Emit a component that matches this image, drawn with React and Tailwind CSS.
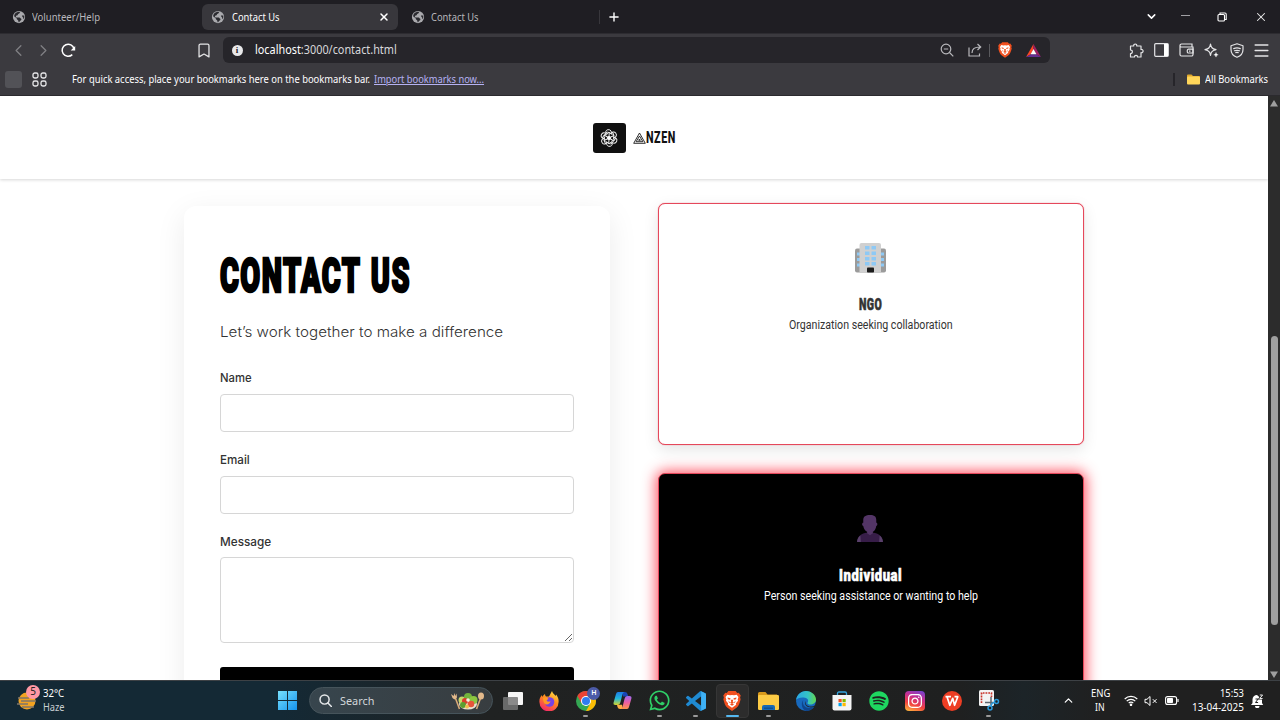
import React, { useLayoutEffect, useRef, useState } from "react";
import {
  Bookmark, ChevronDown, ChevronLeft, ChevronRight, ChevronUp, Menu, Plus, X,
} from "lucide-react";
import { FaInstagram, FaSpotify, FaWhatsapp } from "react-icons/fa";

// Condenses or widens a line of text so that it fills the given width.
function Fit({ w, className = "" , textClass = "", children }) {
  const ref = useRef(null);
  const [scale, setScale] = useState(1);
  useLayoutEffect(() => {
    setScale(w / ref.current.offsetWidth);
  }, [w]);
  return (
    <span className={"block whitespace-nowrap " + className} style={{ width: w }}>
      <span ref={ref} className={"inline-block origin-left " + textClass} style={{ transform: `scaleX(${scale})` }}>
        {children}
      </span>
    </span>
  );
}

function Cell({ className = "w-[25px]", children }) {
  return <div className={"flex shrink-0 items-center justify-center " + className}>{children}</div>;
}

function Globe() {
  return (
    <svg viewBox="0 0 24 24" className="size-[14px] shrink-0">
      <circle cx="12" cy="12" r="10.500" fill="#a9a9ad" />
      <path fill="#2a2a2f" d="M14 3.500c-.5 1.500-1 2.500-2.500 2.800-1.600.4-1 1.700-2 2.500-1 .7-2.300.3-2.800 1.700-.5 1.500 1 2.500 2.800 2.500h3c1.300 0 1.500 1 2.500 1.500 1.500.6 1.500 2 .5 3-.8.9-2.500 1-3 3.500l-1.500-.2c.5-2-.5-3-1.500-4-1.500-1.300-.8-2.300-2-3.300L3.500 10.500c.5-4 4-7.300 8-7.500zM17 9.500h4c.3 2 .3 4-.8 6-1-.4-1-1.500-1.200-2.500-.3-1.200-2-1-2-3.500z" />
    </svg>
  );
}

function TabStrip() {
  return (
    <div className="flex h-[33px] shrink-0 items-center bg-[#1f1e23] text-[11.500px] leading-4 text-[#b8b8bc]">
      <div className="flex w-[202px] items-center gap-[6px] pl-[12px]">
        <Globe />
        <Fit w={68}>Volunteer/Help</Fit>
      </div>
      <div className="flex h-[26px] w-[196px] items-center gap-[7px] rounded-[6px] bg-[#38373c] pr-[8px] pl-[9px] text-white">
        <Globe />
        <Fit w={48}>Contact Us</Fit>
        <X className="ml-auto size-[12px]" strokeWidth={3} />
      </div>
      <div className="flex h-[14px] w-[202px] items-center gap-[6px] border-r border-[#38373c] pl-[13px]">
        <Globe />
        <Fit w={48}>Contact Us</Fit>
      </div>
      <Cell className="w-[27px] text-white"><Plus className="size-[14px]" strokeWidth={2.4} /></Cell>
      <Cell className="ml-[512px] w-[24px] text-white"><ChevronDown className="size-[13px]" strokeWidth={2.800} /></Cell>
      <Cell className="ml-[10px] w-[24px]"><span className="mb-[2px] h-px w-[9px] bg-[#a0a0a4]" /></Cell>
      <Cell className="ml-[13px] w-[24px]">
        <svg viewBox="0 0 10 10" className="size-[10px]" fill="none" stroke="#fff" strokeWidth="1.100">
          <rect x="1" y="2.500" width="6.500" height="6.500" rx="1" />
          <path d="M3 2V1h5a1.200 1.200 0 0 1 1.200 1.200V7.500H8" />
        </svg>
      </Cell>
      <Cell className="ml-[15px] w-[24px] text-[#eee]"><X className="size-[14px]" strokeWidth={1.800} /></Cell>
    </div>
  );
}

function BraveLion({ className }) {
  return (
    <svg viewBox="0 0 20 22" className={className}>
      <path fill="#f1501f" d="M6 0h8l1.800 2 1.700-.3L19.700 5l-.7 2 .6 2c-1 4-2 7.500-4.600 9.500L10 22l-5-3.500C2.400 16.500 1.400 13 .4 9L1 7 .3 5l2.200-3.300L4.200 2z" />
      <path fill="#fff" d="M10 4.300l2.200.4 3-.7 2 2.600-.9 2.600.4 1.400-2.300 3 .2 1.500-2.200 1.700L10 18.600l-2.400-1.800-2.200-1.700.2-1.500-2.300-3 .4-1.400-.9-2.600 2-2.600 3 .7z" />
      <path fill="#f1501f" d="M5 7.200l3.400.8-.5 1.700L5.500 9zM15 7.200l-3.400.8.5 1.700 2.400-.7zM8.700 9.500h2.600l-.4 2.600 1.400.8L10 14.200l-2.300-1.300 1.400-.8zM6 10.800l1.700 1.700-.8 1zM14 10.800l-1.700 1.700.8 1zM7.600 14.900l2.400-.8 2.400.8-2.400 1.300z" />
    </svg>
  );
}

function Toolbar() {
  return (
    <div className="flex h-[33px] shrink-0 items-center border-t border-[#2d2c31] bg-[#3b3a3f] pl-[6px] text-[#e4e4e6]">
      <Cell><ChevronLeft className="size-[19px] text-[#808084]" strokeWidth={1.600} /></Cell>
      <Cell><ChevronRight className="size-[19px] text-[#808084]" strokeWidth={1.600} /></Cell>
      <Cell>
        <svg viewBox="0 0 16 16" className="mr-[1px] size-[16px]" fill="none" stroke="#fff" strokeWidth="1.500">
          <path d="M12.300 12.600A6 6 0 1 1 14 7" />
          <path d="M15.200 4v4.500h-4.500z" fill="#fff" stroke="none" />
        </svg>
      </Cell>
      <Cell className="ml-[111px] w-[24px]"><Bookmark className="h-[17px] w-[18px]" strokeWidth={1.800} /></Cell>
      <div className="ml-[7px] flex h-[26px] w-[827px] shrink-0 items-center rounded-[6px] bg-[#26252a]">
        <Cell className="w-[28px]">
          <span className="flex size-[11px] items-center justify-center rounded-full bg-[#e8e8ea] font-['Liberation_Serif',serif] text-[9px] leading-none font-bold text-[#26252a]">i</span>
        </Cell>
        <Fit w={142} className="ml-[4px] text-[12px] leading-4 text-[#d8d8da]">
          <span className="text-white">localhost</span>:3000/contact.html
        </Fit>
        <Cell className="ml-auto w-[28px]">
          <svg viewBox="0 0 14 14" className="size-[14px]" fill="none" stroke="#b8b8bc" strokeWidth="1.200">
            <circle cx="6" cy="6" r="4.800" /><path d="M3.800 6h4.400M9.500 9.500l3.800 3.800" />
          </svg>
        </Cell>
        <Cell className="w-[28px]">
          <svg viewBox="0 0 14 14" className="size-[14px]" fill="none" stroke="#b8b8bc" strokeWidth="1.200">
            <path d="M1 4.500V13h10.500v-2.500M4 10c0-4 2.500-6 8-6M9.500 1l3.200 3-3.200 3" />
          </svg>
        </Cell>
        <span className="h-[13px] w-px bg-[#5a5a5e]" />
        <Cell className="ml-[1px] w-[28px]"><BraveLion className="h-[16px] w-[14px]" /></Cell>
        <Cell className="mr-[2px] w-[29px]">
          <svg viewBox="0 0 16 14" className="mt-[1px] h-[13px] w-[15px]">
            <path fill="#ff4724" d="M8 0 0 14l5-3 3-5.500z" />
            <path fill="#9e1f63" d="M8 0l8 14-5-3-3-5.500z" />
            <path fill="#662d91" d="M0 14h16l-5-3H5z" />
            <path fill="#fff" d="M8 5.300 11.200 11H4.800z" />
          </svg>
        </Cell>
      </div>
      <Cell className="ml-[74px] w-[25px]">
        <svg viewBox="0 0 15 15" className="size-[15px]" fill="none" stroke="#e4e4e6" strokeWidth="1.200" strokeLinejoin="round">
          <path d="M1.500 3h3.200C4.300.3 8.200.3 7.800 3H12v3.500c2.800-.4 2.800 3.600 0 3.200V14H8.500c.3-2.300-3.200-2.300-3 0h-4v-3.500c2.500.2 2.500-3.700 0-3.500z" />
        </svg>
      </Cell>
      <Cell>
        <svg viewBox="0 0 15 14" className="h-[14px] w-[15px]">
          <rect x=".7" y=".7" width="13.600" height="12.600" rx="1" fill="none" stroke="#e4e4e6" strokeWidth="1.200" />
          <path d="M10 1H14v12H10z" fill="#fff" />
        </svg>
      </Cell>
      <Cell>
        <svg viewBox="0 0 15 14" className="h-[14px] w-[15px]" fill="none" stroke="#e4e4e6" strokeWidth="1.200">
          <path d="M1 3V11.500A1.500 1.500 0 0 0 2.500 13h10a1.500 1.500 0 0 0 1.500-1.500V4H2.200A1.200 1.200 0 0 1 1 2.800 1.500 1.500 0 0 1 2.500 1H13v3" />
          <path d="M14 6.200H9.500a1.200 1.200 0 0 0-1.200 1.200v1.400A1.200 1.200 0 0 0 9.500 10H14z" /><path d="M10 8.100h1.500" />
        </svg>
      </Cell>
      <Cell>
        <svg viewBox="0 0 15 15" className="size-[15px]" fill="none" stroke="#e4e4e6" strokeWidth="1.200" strokeLinejoin="round">
          <path d="M6.500 1c.6 3.500 1.500 4.600 5.500 5.700-4 1.100-4.900 2.200-5.500 5.700C5.900 8.900 5 7.800 1 6.700 5 5.600 5.900 4.500 6.500 1z" />
          <path d="M12 9.500c.3 1.400.8 1.900 2.200 2.300-1.400.4-1.900.9-2.200 2.300-.3-1.400-.8-1.900-2.200-2.300 1.400-.4 1.900-.9 2.200-2.300z" fill="#fff" strokeWidth=".5" />
        </svg>
      </Cell>
      <Cell>
        <svg viewBox="0 0 14 15" className="h-[15px] w-[14px]" fill="none" stroke="#e4e4e6" strokeWidth="1.200" strokeLinecap="round">
          <path d="M7 .8 13 2.700V6.500c0 4-2 6.300-6 7.800C3 12.800 1 10.500 1 6.500V2.700z" strokeLinejoin="round" />
          <path d="M3.700 5.600q3.300-1.300 6.600 0M4.500 7.700q2.500-.8 5 0M5.800 9.600q1.200-.4 2.400 0" />
        </svg>
      </Cell>
      <Cell><Menu className="size-[19px]" strokeWidth={1.800} /></Cell>
    </div>
  );
}

function BookmarksBar() {
  return (
    <div className="flex h-[30px] shrink-0 items-center border-b border-[#2b2a2e] bg-[#3b3a3f] pr-[12px] pb-[3px] pl-[5px] text-[11px] leading-4 text-white">
      <span className="size-[17px] rounded-[3px] bg-[#525257]" />
      <svg viewBox="0 0 15 15" className="mr-[1px] ml-[10px] size-[15px]" fill="none" stroke="#e8e8ea" strokeWidth="1.300">
        <rect x="1" y="1" width="5" height="5" rx="1.800" /><rect x="9" y="1" width="5" height="5" rx="1.800" />
        <rect x="1" y="9" width="5" height="5" rx="1.800" /><rect x="9" y="9" width="5" height="5" rx="1.800" />
      </svg>
      <Fit w={298} className="ml-[24px]">For quick access, place your bookmarks here on the bookmarks bar.</Fit>
      <Fit w={110} className="ml-[4px] text-[#b5b1f2]" textClass="underline underline-offset-1">Import bookmarks now...</Fit>
      <span className="ml-auto h-[13px] w-[2px] bg-[#26252a]" />
      <svg viewBox="0 0 13 11" className="ml-[12px] h-[11px] w-[13px]">
        <path fill="#e0a82c" d="M0 1.500Q0 .5 1 .5h3.500L6 2h6q1 0 1 1v5H0z" />
        <rect y="2.500" width="13" height="8" rx="1" fill="#ffd65a" />
      </svg>
      <Fit w={63} className="ml-[5px]">All Bookmarks</Fit>
    </div>
  );
}

function SiteHeader() {
  return (
    <header className="relative flex h-[83px] shrink-0 items-center justify-center bg-white pt-px shadow-[0_1px_3px_rgba(0,0,0,0.16)]">
      <div className="flex items-center">
        <div className="flex h-[30px] w-[33px] items-center justify-center rounded-[3px] bg-[#101010]">
          <svg viewBox="-10 -10 20 20" className="size-[20px]" fill="none" stroke="#f2f2f2" strokeWidth="1">
            {[0, 60, 120, 180, 240, 300].map((a) => (
              <g key={a} transform={`rotate(${a})`}>
                <path d="M-2.500-3.500C-4-5-3.500-8-1-8.300 2-8.700 3-6 2-4M0-1 .3-6M-3-5.500C-1-6.500 2-5 3.500-3" />
              </g>
            ))}
            <circle r="1.600" fill="#fff" />
          </svg>
        </div>
        <svg viewBox="0 0 13 12" className="ml-[7px] h-[12px] w-[13px]" fill="none" stroke="#181818" strokeWidth=".9">
          <path d="M6.500 1 12.300 11.300H.7zM6.500 4 9.900 9.700H3.100z" />
          <path d="M6.500 7 7.300 8.300H5.700z" />
        </svg>
        <Fit w={30} className="font-['Roboto',sans-serif] text-[16.500px] leading-[30px] font-extrabold text-[#111]" textClass="tracking-[0.8px]">NZEN</Fit>
      </div>
    </header>
  );
}

function ContactForm() {
  const label = "h-4 text-[12px] leading-4 font-medium text-[#333]";
  const field = "block h-[38px] w-full rounded-[4px] border border-[#d6d6d6] bg-white";
  return (
    <form className="mt-[27px] h-[560px] w-[426px] rounded-[12px] bg-white px-[36px] pt-[44px] font-['Inter',sans-serif] shadow-[0_8px_30px_rgba(0,0,0,0.08)]">
      <h1 className="h-[50px] font-['Roboto',sans-serif] text-[48px] leading-[51px] font-black text-black">
        <Fit w={191} textClass="tracking-[2.4px] [word-spacing:3px] [-webkit-text-stroke:2.600px_#000]">CONTACT US</Fit>
      </h1>
      <p className="mt-[21px] text-[14.500px] leading-[21px] font-light text-[#333]">
        <Fit w={283}>Let’s work together to make a difference</Fit>
      </p>
      <label className={"mt-[28px] block " + label}><Fit w={32}>Name</Fit></label>
      <input className={"mt-[8px] " + field} />
      <label className={"mt-[20px] block " + label}><Fit w={30}>Email</Fit></label>
      <input className={"mt-[8px] " + field} />
      <label className={"mt-[20px] block " + label}><Fit w={51}>Message</Fit></label>
      <textarea className="mt-[7px] block h-[86px] w-full resize-y rounded-[4px] border border-[#d6d6d6] bg-white" />
      <button type="button" className="mt-[24px] block h-[40px] w-full rounded-[3px] bg-black" />
    </form>
  );
}

function Building() {
  return (
    <svg viewBox="0 0 31 30" className="h-[30px] w-[31px]">
      <rect y="5.500" width="31" height="24" rx="2" fill="#9b9b9b" />
      {[9.500, 15, 20.500].map((y) => (
        <g key={y} fill="#8ec9f5"><rect x="2" y={y} width="4" height="3" /><rect x="25" y={y} width="4" height="3" /></g>
      ))}
      <path fill="#d0d0d0" d="M4.500 29.500V2Q4.500 0 6.500 0h17.500q2 0 2 2v27.500z" />
      {[3, 8.500, 14, 19].map((y) => (
        <g key={y} fill="#8ec9f5"><rect x="10" y={y} width="4.500" height="3.500" /><rect x="16.500" y={y} width="4.500" height="3.500" /></g>
      ))}
      <rect x="12" y="24.500" width="7" height="5" rx=".8" fill="#1c1c1c" />
    </svg>
  );
}

function Person() {
  return (
    <svg viewBox="0 0 27 28" className="mr-[1px] h-[27px] w-[26px]">
      <path fill="#371d48" d="M0 28c.5-5 3-8 9.500-9.500h8C24 20 26.500 23 27 28z" />
      <path fill="#59406a" d="M0 28c.3-3 1.300-5.300 3.500-6.800L4 28zM27 28c-.3-3-1.300-5.300-3.500-6.800L23 28z" />
      <path fill="#533566" d="M6.500 5C6.500 1.500 9 0 13.500 0S20 1.500 20 5v3c1.600 0 1.500 3 0 3.300-.5 3-1.800 5-3.500 6.200V19l-3 2-3-2v-1.500C8.800 16.300 7 14.300 6.500 11.300 5 11 4.900 8 6.500 8z" />
    </svg>
  );
}

function Choice({ icon, title, titleWidth, text, textWidth, className }) {
  return (
    <div className={"flex h-[242px] w-[426px] flex-col items-center rounded-[7px] border pr-[1px] font-['Roboto',sans-serif] " + className}>
      {icon}
      <h2 className="text-[17px] leading-[22px] font-black"><Fit w={titleWidth} textClass="tracking-[0.7px] [-webkit-text-stroke:0.600px_currentColor]">{title}</Fit></h2>
      <p className="text-[12.500px] leading-[19px]"><Fit w={textWidth}>{text}</Fit></p>
    </div>
  );
}

function Page() {
  return (
    <div className="flex min-h-0 flex-1 bg-white">
      <div className="flex min-w-0 flex-1 flex-col overflow-hidden">
        <SiteHeader />
        <main className="flex min-h-0 flex-1 items-start justify-center gap-[48px] overflow-hidden">
          <ContactForm />
          <div className="flex flex-col gap-[28px] pt-[24px]">
            <Choice icon={<Building />} title="NGO" titleWidth={23} text="Organization seeking collaboration" textWidth={164}
              className="border-[#e5485b] bg-white pt-[39px] text-[#333] shadow-[0_0_1px_rgba(229,72,91,0.9),0_5px_15px_rgba(0,0,0,0.1)] [&>h2]:mt-[20px]" />
            <Choice icon={<Person />} title="Individual" titleWidth={63} text="Person seeking assistance or wanting to help" textWidth={214}
              className="border-[#e5485b] bg-black pt-[41px] text-white shadow-[0_0_14px_2px_rgba(255,40,60,0.8)] [&>h2]:mt-[22px]" />
          </div>
        </main>
      </div>
      <div className="flex w-[12px] shrink-0 flex-col items-center bg-[#2c2c2c] py-[4px]">
        <svg viewBox="0 0 8 7" className="h-[7px] w-[8px]"><path fill="#9f9f9f" d="M4 0l4 6.500H0z" /></svg>
        <span className="mt-[229px] h-[289px] w-[7px] rounded-full bg-[#9f9f9f]" />
        <svg viewBox="0 0 8 7" className="mt-auto -mb-[2px] h-[7px] w-[8px]"><path fill="#9f9f9f" d="M4 7l4-6.500H0z" /></svg>
      </div>
    </div>
  );
}

function TaskApp({ children, running, active }) {
  return (
    <div className="flex h-[40px] w-[36.600px] shrink-0 items-center justify-center">
      <div className={active
        ? "relative flex h-[34px] w-[33px] items-center justify-center rounded-[4px] border border-[#363636] bg-[#2c2c2c]"
        : "relative flex h-[34px] w-[33px] items-center justify-center"}>
        {children}
        {running && <span className="absolute bottom-[1px] h-[2px] w-[5px] rounded-full bg-[#9a9a9a]" />}
        {active && <span className="absolute bottom-0 h-[2px] w-[13px] rounded-full bg-[#55b8f0]" />}
      </div>
    </div>
  );
}

function Firefox() {
  return (
    <svg viewBox="0 0 20 20" className="size-[20px]">
      <defs>
        <linearGradient id="ff" x1=".8" y1="0" x2=".3" y2="1"><stop stopColor="#ffe14a" /><stop offset=".45" stopColor="#ff8a1e" /><stop offset="1" stopColor="#f5256a" /></linearGradient>
      </defs>
      <path fill="url(#ff)" d="M13 0c.5 2.500 2.500 3 3.500 5l.7-1.500C19 6 19.800 8 19.600 11A9.600 9.400 0 0 1 .4 11C.3 8 1 6 3 4v2c1-1 1.500-2 3-3 0 1 .5 2 1 2.500h3C11 3.500 12 2 13 0z" />
      <circle cx="10.500" cy="11" r="4.800" fill="#7542e5" />
      <path fill="#ff9a24" d="M4 7c2-1.500 4.500-.5 5.500.8l-2 1.700c1 1.500 3 1.500 4 .5-.5 3-3.500 4.500-6 2.500C4.500 11 4 9 4 7z" />
    </svg>
  );
}

function Chrome() {
  return (
    <svg viewBox="0 0 20 20" className="size-[20px]">
      <circle cx="10" cy="10" r="10" fill="#34a853" />
      <path fill="#ea4335" d="M1.340 5A10 10 0 0 1 18.660 5H10L5.670 12.500z" />
      <path fill="#fbbc05" d="M18.660 5A10 10 0 0 1 10 20l4.330-7.500L10 5z" />
      <circle cx="10" cy="10" r="5" fill="#fff" /><circle cx="10" cy="10" r="4" fill="#2f7cf0" />
    </svg>
  );
}

function Copilot() {
  return (
    <svg viewBox="0 0 19 19" className="size-[19px]">
      <defs>
        <linearGradient id="ca" x2="0" y2="1"><stop stopColor="#1c7be8" /><stop offset=".5" stopColor="#22b6d8" /><stop offset="1" stopColor="#d5d62c" /></linearGradient>
        <linearGradient id="cb" x2="0" y2="1"><stop stopColor="#9b6af0" /><stop offset=".5" stopColor="#ee5fa2" /><stop offset="1" stopColor="#ff9648" /></linearGradient>
      </defs>
      <path fill="#1745b5" d="M9 1h3q2 0 2.500 2l.8 2.500H10z" />
      <path fill="url(#ca)" d="M5 1h6.500Q10 1.300 9.500 3L7.500 11q-.7 3-3 3h-2Q0 14 .6 11.500L3 3Q3.500 1 5 1z" />
      <path fill="#ffb044" d="M10 18H7q-2 0-2.500-2L4 13.800h5z" />
      <path fill="url(#cb)" d="M14 18H7.500q1.500-.3 2-2l2-8q.7-3 3-3h2Q19 5 18.400 7.500L16 16q-.5 2-2 2z" />
    </svg>
  );
}

function VsCode() {
  return (
    <svg viewBox="0 0 24 24" className="size-[20px]">
      <path fill="#1f8ad2" d="M23.150 2.587L18.210.21a1.494 1.494 0 0 0-1.705.29l-9.460 8.630-4.120-3.128a.999.999 0 0 0-1.276.057L.327 7.261A1 1 0 0 0 .326 8.740L3.899 12 .326 15.260a1 1 0 0 0 .001 1.479L1.650 17.940a.999.999 0 0 0 1.276.057l4.120-3.128 9.460 8.630a1.492 1.492 0 0 0 1.704.29l4.942-2.377A1.500 1.500 0 0 0 24 20.060V3.939a1.500 1.500 0 0 0-.85-1.352zm-5.146 14.861L10.826 12l7.178-5.448v10.896z" />
      <path fill="#3eb0f5" d="M18.210.21l4.940 2.377A1.500 1.500 0 0 1 24 3.940V20.060a1.500 1.500 0 0 1-.85 1.350l-4.940 2.380z" />
    </svg>
  );
}

function Folder() {
  return (
    <svg viewBox="0 0 21 18" className="h-[18px] w-[21px]">
      <path fill="#d99a1c" d="M0 1.500Q0 0 1.500 0h6L9.500 2.500H19L20 6H0z" />
      <rect y="3" width="21" height="15" rx="1.200" fill="#fccb45" />
      <path fill="#1769b5" d="M4 18v-3q0-2 2-2h9q2 0 2 2v3z" /><path fill="#0f4f91" d="M6 15.500h9V17H6z" />
    </svg>
  );
}

function Edge() {
  return (
    <svg viewBox="0 0 20 20" className="size-[20px]">
      <defs>
        <linearGradient id="ed" x2="1"><stop stopColor="#2aa7e5" /><stop offset=".6" stopColor="#35c3c4" /><stop offset="1" stopColor="#63d84e" /></linearGradient>
      </defs>
      <circle cx="10" cy="10" r="10" fill="#1769bd" />
      <path fill="url(#ed)" d="M0 9C1 3.500 5 0 10 0c6 0 10 4.500 10 8.500 0 3.500-3 5-5.500 5-2 0-3.300-.8-3-1.800 1.500-2 .3-4.700-2.500-5C5 6 1.500 7 0 9z" />
      <path fill="#0f458c" d="M7.200 9C6 12.500 8 17.500 14 17c2 0 3.500-1 4.500-1.500C16.500 18.500 13.500 20 10.500 20 6 19 4.500 12.500 7.200 9z" />
      <path fill="#202325" d="M9.500 10c-.5 3 1.500 5.500 5 5.500 2 0 3.500-.5 4.800-1.500l.7-2.500v5l-2-.7c-2 1-6 1-8-1.300C8.700 13 8.700 11 9.500 10z" />
    </svg>
  );
}

function Store() {
  return (
    <svg viewBox="0 0 20 20" className="size-[20px]">
      <path d="M5.500 5V2.500Q5.500 1 7 1h6q1.500 0 1.500 1.500V5" fill="none" stroke="#34a5df" strokeWidth="1.300" />
      <path fill="#f4f4f4" d="M.5 4h19v13.500q0 2-2 2h-15q-2 0-2-2z" />
      <path fill="#f25022" d="M6.500 8h3.200v3.200H6.500z" /><path fill="#7fba00" d="M10.500 8h3.200v3.200h-3.200z" />
      <path fill="#00a4ef" d="M6.500 12h3.200v3.200H6.500z" /><path fill="#ffb900" d="M10.500 12h3.200v3.200h-3.200z" />
    </svg>
  );
}

function Snip() {
  return (
    <svg viewBox="0 0 22 21" className="h-[21px] w-[22px]">
      <rect x="1" y="0" width="15" height="16" rx="1.500" fill="#f3f3f3" />
      <path d="M3.500 13V3h10v4" fill="none" stroke="#c83228" strokeWidth="1.600" strokeDasharray="1.800 1" />
      <path d="M7 12.500h8M13 7v8" stroke="#5c6770" strokeWidth="1.500" />
      <g fill="none" stroke="#2b9bdc" strokeWidth="1.500"><circle cx="18.500" cy="11.500" r="2" /><circle cx="12" cy="18" r="2" /><path d="M13 16l1-2.500 3-1.500" /></g>
    </svg>
  );
}

function Salad() {
  return (
    <svg viewBox="0 0 34 18" className="h-[18px] w-[34px]">
      <path d="M4 5l4.500 12M30 5l-4.500 12" stroke="#d8aa78" strokeWidth="1.600" />
      <path fill="#e3b98b" d="M0 2l1.500 4 2 1.500L6 5.500 5.500 1.500 4.200 4 3.500 1 2.600 4z" />
      <ellipse cx="30" cy="4" rx="3" ry="3.500" fill="#e3b98b" />
      <ellipse cx="17" cy="12" rx="9" ry="5.500" fill="#e9e1cf" />
      <circle cx="11" cy="8" r="3.500" fill="#c9d86a" /><circle cx="17" cy="5" r="4" fill="#73b43c" />
      <circle cx="22.500" cy="8" r="4" fill="#8dc640" /><circle cx="14" cy="9" r="3" fill="#da3d2c" />
      <circle cx="20" cy="12" r="3.300" fill="#e8543a" /><circle cx="12" cy="13" r="3" fill="#5c9e30" />
      <circle cx="17" cy="8" r="1.800" fill="#f6efdc" /><circle cx="16" cy="14.500" r="2" fill="#f0c050" />
    </svg>
  );
}

function Taskbar() {
  return (
    <div className="flex h-[40px] shrink-0 items-center border-t border-[#3d4145] bg-[linear-gradient(90deg,#142935_0%,#142935_22%,#202222_38%,#1f2020_75%,#1c2428_80%,#202020_86%)] text-[10.500px] text-white">
      <div className="relative ml-[17px] size-[22px]">
        <svg viewBox="0 0 22 22" className="size-[22px]">
          <circle cx="10" cy="11" r="8.500" fill="#f2a321" />
          <path d="M1 8h11M4 11h15M0 14h11M5 17h12" stroke="#7f7669" strokeWidth="1.400" />
        </svg>
        <span className="absolute -top-[5px] left-[9px] flex size-[14px] items-center justify-center rounded-full bg-[#ff98a4] text-[10px] text-[#222]">5</span>
      </div>
      <div className="ml-[4px] leading-[13.500px]">
        <Fit w={21}>32°C</Fit>
        <Fit w={22} className="text-[#c8ced2]">Haze</Fit>
      </div>
      <svg viewBox="0 0 19 19" className="ml-[213px] size-[19px] shrink-0">
        <defs><linearGradient id="wn" x2="1" y2="1"><stop stopColor="#77e0fd" /><stop offset="1" stopColor="#1593ee" /></linearGradient></defs>
        <path fill="url(#wn)" d="M0 0h9v9H0zM10 0h9v9h-9zM0 10h9v9H0zM10 10h9v9h-9z" />
      </svg>
      <div className="ml-[11.500px] flex h-[27px] w-[184px] shrink-0 items-center rounded-full border border-[#46545b] bg-[linear-gradient(90deg,#37454d,#383d40)] pr-[7px] pl-[9px]">
        <svg viewBox="0 0 14 14" className="size-[13px]" fill="none" stroke="#e6e8ea" strokeWidth="1.600">
          <circle cx="6" cy="6" r="4.900" /><path d="M9.600 9.600l3.800 3.800" strokeLinecap="round" />
        </svg>
        <Fit w={34} className="ml-[8px] text-[11.500px] leading-4 text-[#d2d7da]">Search</Fit>
        <span className="ml-auto"><Salad /></span>
      </div>
      <div className="ml-[2px] flex">
        <TaskApp>
          <svg viewBox="0 0 20 18" className="h-[18px] w-[20px]">
            <rect x="5" width="15" height="13" rx="1" fill="#f5f5f5" /><rect y="5" width="15" height="13" rx="1" fill="#777" opacity=".85" />
          </svg>
        </TaskApp>
        <TaskApp><Firefox /></TaskApp>
        <TaskApp running>
          <Chrome />
          <span className="absolute top-[3px] left-[18px] flex size-[13px] items-center justify-center rounded-full bg-[#4c5ba8] text-[7px] font-semibold">H</span>
        </TaskApp>
        <TaskApp><Copilot /></TaskApp>
        <TaskApp running><FaWhatsapp className="size-[23px] text-[#2fcf68]" /></TaskApp>
        <TaskApp running><VsCode /></TaskApp>
        <TaskApp active><BraveLion className="h-[20px] w-[18px]" /></TaskApp>
        <TaskApp running><Folder /></TaskApp>
        <TaskApp><Edge /></TaskApp>
        <TaskApp><Store /></TaskApp>
        <TaskApp><FaSpotify className="size-[20px] text-[#1ed760]" /></TaskApp>
        <TaskApp>
          <span className="flex size-[20px] items-center justify-center rounded-[4px] bg-[linear-gradient(20deg,#fdb03c_5%,#f2413f_35%,#c72f92_65%,#6a45d8)]">
            <FaInstagram className="size-[16px] text-white" />
          </span>
        </TaskApp>
        <TaskApp>
          <svg viewBox="0 0 20 20" className="size-[20px]">
            <circle cx="10" cy="10" r="10" fill="#ee3e24" />
            <path d="M3.500 5.700h5.500M5 5.700l2.800 8.600 2.900-7 1.900 7 3.200-8.600H12.500" fill="none" stroke="#fff" strokeWidth="1.700" strokeLinejoin="round" />
          </svg>
        </TaskApp>
        <TaskApp running><Snip /></TaskApp>
      </div>
      <Cell className="ml-[49.500px] w-[24px]"><ChevronUp className="size-[13px]" strokeWidth={2.300} /></Cell>
      <div className="ml-[10px] flex w-[20px] flex-col items-center leading-[13.500px]">
        <Fit w={19}>ENG</Fit>
        <Fit w={10}>IN</Fit>
      </div>
      <svg viewBox="0 0 14 11" className="ml-[14px] h-[11px] w-[14px] shrink-0" fill="none" stroke="#fff" strokeWidth="1.200">
        <path d="M.7 4a9 9 0 0 1 12.600 0M2.700 6.200a6 6 0 0 1 8.600 0M4.700 8.200a3.200 3.200 0 0 1 4.600 0" /><circle cx="7" cy="9.800" r=".7" fill="#fff" />
      </svg>
      <svg viewBox="0 0 14 12" className="ml-[6px] h-[12px] w-[14px] shrink-0" fill="none" stroke="#fff" strokeWidth="1">
        <path d="M1 4.300h2L6 1.500v9L3 7.700H1zM8.800 4.200l3.700 3.700M12.500 4.200L8.800 7.900" />
      </svg>
      <svg viewBox="0 0 14 9" className="ml-[7px] h-[9px] w-[14px] shrink-0">
        <rect x=".6" y=".6" width="11" height="7.800" rx="2" fill="none" stroke="#fff" strokeWidth="1.100" />
        <rect x="2" y="2" width="6" height="5" rx=".8" fill="#fff" /><path d="M13 3v3" stroke="#fff" strokeWidth="1.200" />
      </svg>
      <div className="ml-auto flex flex-col items-end leading-[13.500px]">
        <Fit w={24}>15:53</Fit>
        <Fit w={52}>13-04-2025</Fit>
      </div>
      <svg viewBox="0 0 13 14" className="mr-[16px] ml-[7px] h-[14px] w-[13px] shrink-0">
        <path fill="#fff" d="M0 11l1.500-2V5.500A4.500 4.500 0 0 1 6 1l5 4.500v3.500l1.200 2zM4 12h4.500a2.200 2.200 0 0 1-4.500 0z" />
        <path d="M4.500 5h2.600L4.500 8.500h2.600" fill="none" stroke="#222" strokeWidth="1" />
        <path d="M8.800 1h2.800L8.800 4.500h2.800" fill="none" stroke="#222" strokeWidth="2.200" />
        <path d="M8.800 1h2.800L8.800 4.500h2.800" fill="none" stroke="#fff" strokeWidth=".9" />
      </svg>
    </div>
  );
}

export default function App() {
  return (
    <div className="flex h-[720px] w-[1280px] flex-col overflow-hidden font-['Noto_Sans',sans-serif]">
      <TabStrip />
      <Toolbar />
      <BookmarksBar />
      <Page />
      <Taskbar />
    </div>
  );
}
